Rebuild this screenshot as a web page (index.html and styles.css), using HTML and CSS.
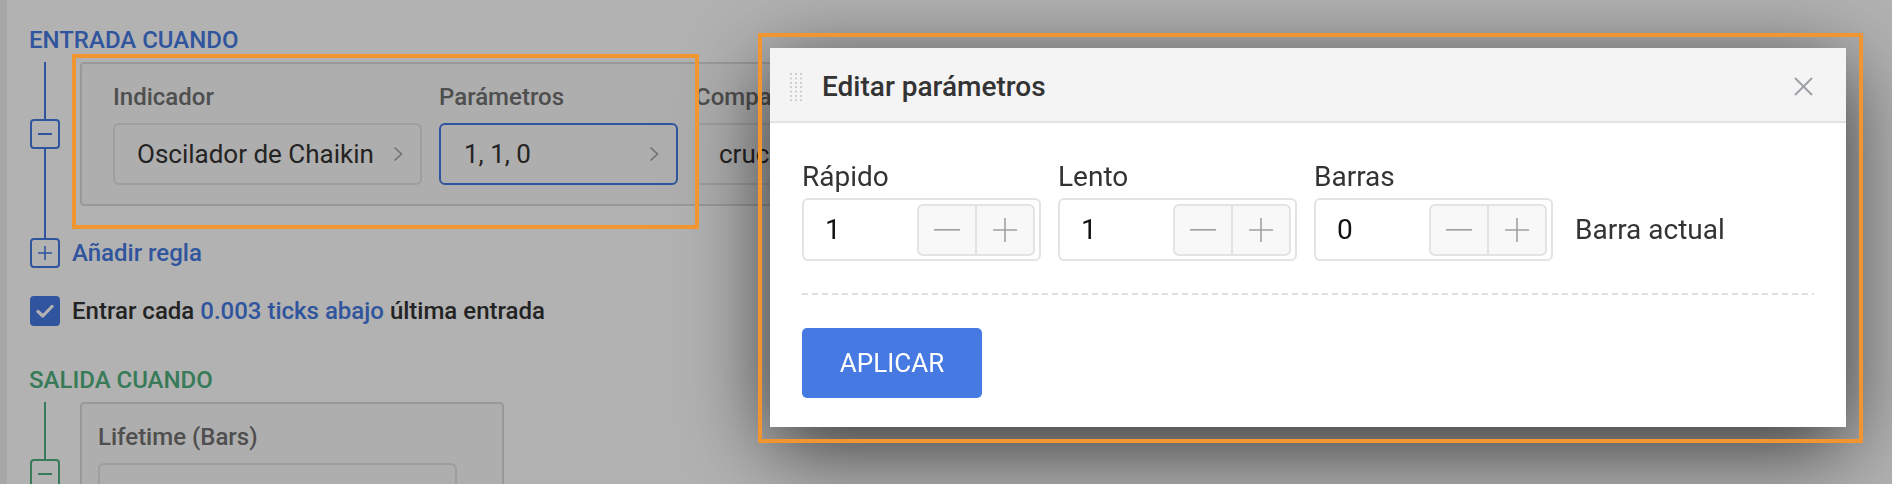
FILE: index.html
```html
<!DOCTYPE html>
<html lang="es">
<head>
<meta charset="utf-8">
<title>Editar parámetros</title>
<link rel="stylesheet" href="styles.css">
</head>
<body>
<div class="page">
  <div class="edge"></div>
  <main class="main">
    <section class="block entry">
      <h2 class="block-title">ENTRADA CUANDO</h2>
      <div class="rule-row">
        <div class="rail">
          <span class="seg"></span>
          <span class="rail-btn" aria-label="Quitar regla">
            <svg width="14" height="2" viewBox="0 0 14 2"><rect width="14" height="2" fill="currentColor"/></svg>
          </span>
          <span class="seg"></span>
        </div>
        <div class="rule-card">
          <div class="field f-wide">
            <span class="field-label">Indicador</span>
            <div class="select"><span>Oscilador de Chaikin</span>
              <svg class="chev" width="10" height="16" viewBox="0 0 10 16"><polyline points="1.5,1.5 8.5,8 1.5,14.5" fill="none" stroke="currentColor" stroke-width="1.4"/></svg>
            </div>
          </div>
          <div class="field">
            <span class="field-label">Parámetros</span>
            <div class="select active"><span>1, 1, 0</span>
              <svg class="chev" width="10" height="16" viewBox="0 0 10 16"><polyline points="1.5,1.5 8.5,8 1.5,14.5" fill="none" stroke="currentColor" stroke-width="1.4"/></svg>
            </div>
          </div>
          <div class="field">
            <span class="field-label">Comparar</span>
            <div class="select"><span>cruce</span>
              <svg class="chev" width="10" height="16" viewBox="0 0 10 16"><polyline points="1.5,1.5 8.5,8 1.5,14.5" fill="none" stroke="currentColor" stroke-width="1.4"/></svg>
            </div>
          </div>
        </div>
      </div>
      <div class="connector"></div>
      <div class="add-row">
        <span class="rail-btn" aria-label="Añadir regla">
          <svg width="14" height="14" viewBox="0 0 14 14"><path d="M7 0V14M0 7H14" stroke="currentColor" stroke-width="1.6"/></svg>
        </span>
        <span class="add-text">Añadir regla</span>
      </div>
      <div class="check-row">
        <span class="checkbox">
          <svg width="18" height="14" viewBox="0 0 18 14"><polyline points="2,7.5 6.8,12 16,2.5" fill="none" stroke="#fff" stroke-width="3.2" stroke-linecap="round" stroke-linejoin="round"/></svg>
        </span>
        <span class="check-text">Entrar cada <span class="link">0.003 ticks abajo</span> última entrada</span>
      </div>
    </section>

    <section class="block exit">
      <h2 class="block-title">SALIDA CUANDO</h2>
      <div class="rule-row">
        <div class="rail">
          <span class="seg"></span>
          <span class="rail-btn" aria-label="Quitar regla">
            <svg width="14" height="2" viewBox="0 0 14 2"><rect width="14" height="2" fill="currentColor"/></svg>
          </span>
          <span class="seg"></span>
        </div>
        <div class="rule-card exit-card">
          <div class="field f-life">
            <span class="field-label">Lifetime (Bars)</span>
            <div class="select"><span></span></div>
          </div>
        </div>
      </div>
    </section>
  </main>
</div>

<div class="backdrop"></div>

<div class="modal" role="dialog" aria-label="Editar parámetros">
  <div class="modal-head">
    <svg class="grip" width="12" height="28" viewBox="0 0 12 28">
      <g fill="#bcbcbc">
        <rect x="0.2" y="0.2" width="1.6" height="1.6"/><rect x="5.2" y="0.2" width="1.6" height="1.6"/><rect x="10.2" y="0.2" width="1.6" height="1.6"/>
        <rect x="0.2" y="4.6" width="1.6" height="1.6"/><rect x="5.2" y="4.6" width="1.6" height="1.6"/><rect x="10.2" y="4.6" width="1.6" height="1.6"/>
        <rect x="0.2" y="9" width="1.6" height="1.6"/><rect x="5.2" y="9" width="1.6" height="1.6"/><rect x="10.2" y="9" width="1.6" height="1.6"/>
        <rect x="0.2" y="13.4" width="1.6" height="1.6"/><rect x="5.2" y="13.4" width="1.6" height="1.6"/><rect x="10.2" y="13.4" width="1.6" height="1.6"/>
        <rect x="0.2" y="17.8" width="1.6" height="1.6"/><rect x="5.2" y="17.8" width="1.6" height="1.6"/><rect x="10.2" y="17.8" width="1.6" height="1.6"/>
        <rect x="0.2" y="22.2" width="1.6" height="1.6"/><rect x="5.2" y="22.2" width="1.6" height="1.6"/><rect x="10.2" y="22.2" width="1.6" height="1.6"/>
        <rect x="0.2" y="26.4" width="1.6" height="1.6"/><rect x="5.2" y="26.4" width="1.6" height="1.6"/><rect x="10.2" y="26.4" width="1.6" height="1.6"/>
      </g>
    </svg>
    <span class="modal-title">Editar parámetros</span>
    <svg class="close" width="19" height="19" viewBox="0 0 19 19"><path d="M1 1L18 18M18 1L1 18" stroke="#9ca1a7" stroke-width="2"/></svg>
  </div>
  <div class="modal-body">
    <div class="params">
      <div class="param">
        <span class="param-label">Rápido</span>
        <div class="num">
          <span class="num-value">1</span>
          <div class="stepper">
            <span class="step"><svg width="26" height="2" viewBox="0 0 26 2"><rect width="26" height="1.6" fill="#a0a0a0"/></svg></span>
            <span class="step"><svg width="24" height="24" viewBox="0 0 24 24"><path d="M12 0V24M0 12H24" stroke="#a0a0a0" stroke-width="1.6"/></svg></span>
          </div>
        </div>
      </div>
      <div class="param">
        <span class="param-label">Lento</span>
        <div class="num">
          <span class="num-value">1</span>
          <div class="stepper">
            <span class="step"><svg width="26" height="2" viewBox="0 0 26 2"><rect width="26" height="1.6" fill="#a0a0a0"/></svg></span>
            <span class="step"><svg width="24" height="24" viewBox="0 0 24 24"><path d="M12 0V24M0 12H24" stroke="#a0a0a0" stroke-width="1.6"/></svg></span>
          </div>
        </div>
      </div>
      <div class="param">
        <span class="param-label">Barras</span>
        <div class="num">
          <span class="num-value">0</span>
          <div class="stepper">
            <span class="step"><svg width="26" height="2" viewBox="0 0 26 2"><rect width="26" height="1.6" fill="#a0a0a0"/></svg></span>
            <span class="step"><svg width="24" height="24" viewBox="0 0 24 24"><path d="M12 0V24M0 12H24" stroke="#a0a0a0" stroke-width="1.6"/></svg></span>
          </div>
        </div>
      </div>
      <span class="param-note">Barra actual</span>
    </div>
    <div class="divider"></div>
    <button class="apply">APLICAR</button>
  </div>
</div>

<div class="mark mark-rule"></div>
<div class="mark mark-modal"></div>
</body>
</html>
```

FILE: styles.css
```css
* { box-sizing: border-box; }
html, body { margin: 0; height: 100%; }
body {
  font-family: Roboto, "Noto Sans", "Liberation Sans", sans-serif;
  background: #ffffff;
  color: #333333;
  overflow: hidden;
}

/* ---------- underlying page ---------- */
.page { display: flex; min-height: 484px; }
.edge { width: 7px; flex: none; background: #f0f0f0; }
.main { flex: 1; padding: 26px 0 0 22px; }

.block-title {
  margin: 0;
  font-size: 24px;
  line-height: 28px;
  font-weight: 500;
}
.entry .block-title { color: #467ae2; }
.exit .block-title { color: #4fb07f; }
.exit { margin-top: 40px; }

.rule-row { display: flex; margin-top: 8px; }
.rail {
  width: 30px;
  margin-left: 1px;
  flex: none;
  display: flex;
  flex-direction: column;
  align-items: center;
}
.entry .rail, .entry .rail-btn, .connector { color: #467ae2; }
.exit .rail { color: #4fb07f; }
.seg { flex: 1; width: 2px; background: currentColor; }
.rail-btn {
  width: 30px;
  height: 30px;
  flex: none;
  border: 2px solid currentColor;
  border-radius: 4px;
  display: flex;
  align-items: center;
  justify-content: center;
}

.rule-card {
  margin-left: 20px;
  display: flex;
  gap: 17px;
  border: 2px solid #dcdcdc;
  border-radius: 4px;
  background: #fafafa;
  padding: 19px 31px;
}
.field { width: 239px; flex: none; }
.f-wide { width: 309px; }
.field-label {
  display: block;
  font-size: 24px;
  line-height: 28px;
  font-weight: 500;
  color: #717171;
  margin-bottom: 12px;
  white-space: nowrap;
}
.select {
  height: 62px;
  display: flex;
  align-items: center;
  justify-content: space-between;
  border: 2px solid #e2e2e2;
  border-radius: 6px;
  background: #fafafa;
  padding: 0 17px 0 22px;
  font-size: 26px;
  color: #333333;
  white-space: nowrap;
  overflow: hidden;
}
.select.active { border-color: #467ae2; padding-left: 23px; }
.chev { color: #9a9a9a; flex: none; }

.exit-card { padding: 19px 45px 19px 16px; }
.f-life { width: 359px; }

.connector { width: 2px; height: 32px; margin-left: 15px; background: currentColor; }

.add-row { display: flex; align-items: center; gap: 12px; margin-left: 1px; }
.add-text { font-size: 24px; line-height: 28px; font-weight: 500; color: #467ae2; }

.check-row { display: flex; align-items: center; gap: 12px; margin: 28px 0 0 1px; }
.checkbox {
  width: 30px;
  height: 30px;
  flex: none;
  border-radius: 4px;
  background: #467ae2;
  display: flex;
  align-items: center;
  justify-content: center;
}
.check-text { font-size: 24px; line-height: 28px; font-weight: 500; color: #333333; white-space: nowrap; }
.link { color: #467ae2; }

/* ---------- modal layer ---------- */
.backdrop {
  position: fixed;
  inset: 0;
  background: rgba(0, 0, 0, 0.3);
}

.modal {
  position: absolute;
  left: 770px;
  top: 48px;
  width: 1076px;
  background: #ffffff;
  box-shadow: 0 20px 80px rgba(0, 0, 0, 0.7);
}
.modal-head {
  height: 75px;
  padding: 4px 33px 0 20px;
  display: flex;
  align-items: center;
  background: #f4f4f4;
  border-bottom: 2px solid #e3e3e3;
}
.grip { flex: none; }
.modal-title {
  flex: 1;
  margin-left: 20px;
  font-size: 28px;
  line-height: 32px;
  font-weight: 500;
  color: #333333;
}
.close { flex: none; }

.modal-body { padding: 38px 32px 29px; }
.params { display: flex; align-items: flex-end; gap: 17px; }
.param { width: 239px; flex: none; }
.param-label {
  display: block;
  font-size: 28px;
  line-height: 32px;
  color: #333333;
  margin-bottom: 5px;
}
.num {
  height: 63px;
  display: flex;
  align-items: center;
  border: 2px solid #e3e3e3;
  border-radius: 6px;
  padding: 0 4px 0 21px;
}
.num-value { flex: 1; font-size: 28px; color: #111111; }
.stepper {
  width: 118px;
  height: 52px;
  display: flex;
  border: 2px solid #e3e3e3;
  border-radius: 6px;
  background: #f8f8f8;
  overflow: hidden;
}
.step { flex: 1; display: flex; align-items: center; justify-content: center; }
.step + .step { border-left: 2px solid #e3e3e3; }
.param-note {
  height: 63px;
  display: flex;
  align-items: center;
  margin-left: 5px;
  font-size: 28px;
  color: #333333;
}

.divider {
  margin-top: 32px;
  height: 2px;
  background: repeating-linear-gradient(to right, #dde1e6 0 6px, transparent 6px 10px);
}
.apply {
  margin-top: 33px;
  width: 180px;
  height: 70px;
  border: 0;
  border-radius: 5px;
  background: #467ae2;
  color: #ffffff;
  font-family: inherit;
  font-size: 26px;
  font-weight: 400;
  display: block;
}

/* ---------- annotation highlights ---------- */
.mark {
  position: absolute;
  border: 4px solid #f0952f;
}
.mark-rule { left: 72px; top: 54px; width: 627px; height: 175px; }
.mark-modal { left: 758px; top: 33px; width: 1105px; height: 410px; }
```
